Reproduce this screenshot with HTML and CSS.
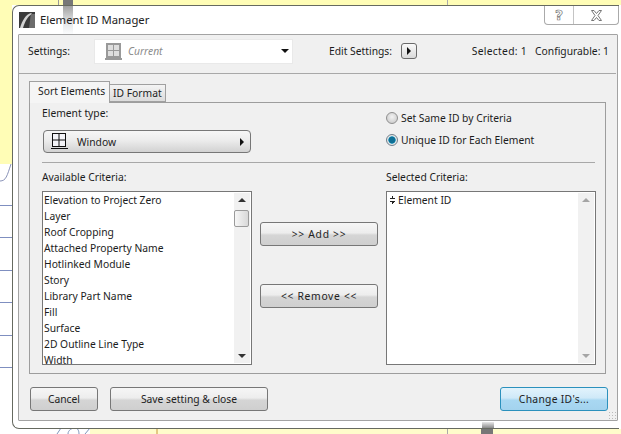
FILE: index.html
```html
<!DOCTYPE html>
<html lang="en">
<head>
<meta charset="utf-8">
<title>Element ID Manager</title>
<link rel="stylesheet" href="styles.css">
</head>
<body>
<div class="desktop">
  <div class="paper paper-left"></div>
  <div class="paper paper-top"></div>
  <div class="paper paper-bottom"></div>
  <div class="plan plan-h y1"></div>
  <div class="plan plan-h y2"></div>
  <div class="plan plan-h y3"></div>
  <div class="plan plan-h y4"></div>
  <div class="plan plan-h y5"></div>
  <div class="plan plan-h y6"></div>
  <div class="plan plan-v v1"></div>
  <div class="plan plan-v v2"></div>
  <div class="plan plan-v v3"></div>
  <div class="wall wall-top"></div>
  <div class="wall wall-bottom"></div>
  <svg class="curves" width="621" height="434" viewBox="0 0 621 434">
    <path d="M0 181C6 181 7 176 11 164" fill="none" stroke="#8a93b8"/>
    <path d="M57 434L61 428M68 434C68 430 72 428 75 428C78 428 79 431 79 434M85 434L90 428" fill="none" stroke="#7f96bd"/>
    <path d="M157 429V434" stroke="#c9963c"/>
  </svg>

  <section class="window">
    <div class="smear smear-top"></div>
    <div class="smear smear-bottom"></div>
    <header class="titlebar">
      <svg class="app-logo" width="16" height="16" viewBox="0 0 16 16">
        <rect width="16" height="16" fill="#3a3a3a"/>
        <path d="M1 16C3 9 7 2 12 1L13 2C9 4 6 9 4 16Z" fill="#d2d2d2"/>
        <path d="M12 2H16V16H10C11 10 11 6 12 2Z" fill="#6c6c6c"/>
      </svg>
      <span class="title">Element ID Manager</span>
      <div class="captions">
        <span class="caption caption-help">?</span>
        <span class="caption caption-close">
          <svg width="13" height="11" viewBox="0 0 13 11"><path d="M1.500 .5H4L6.500 3.500L9 .5H11.500L8 5.500L11.500 10.500H9L6.500 7.500L4 10.500H1.500L5 5.500Z" fill="#fff" stroke="#777"/></svg>
        </span>
      </div>
    </header>

    <main class="panel">
      <div class="settings-row">
        <span class="settings-label">Settings:</span>
        <div class="combo">
          <svg class="combo-icon" width="17" height="18" viewBox="0 0 17 18">
            <path d="M1 0H16V15H1Z" fill="#999"/>
            <path d="M3 2H8V7H3ZM9 2H14V7H9ZM3 8H8V13H3ZM9 8H14V13H9Z" fill="#dedede"/>
            <rect y="15" width="17" height="2" fill="#999"/>
          </svg>
          <em class="combo-value">Current</em>
          <span class="arrow-down"></span>
        </div>
        <span class="edit-label">Edit Settings:</span>
        <button class="mini-btn" type="button" aria-label="Edit"><span class="arrow-right"></span></button>
        <span class="counts"><span class="count-selected">Selected: 1</span><span>Configurable: 1</span></span>
      </div>

      <div class="tabs">
        <div class="tab tab-active">Sort Elements</div>
        <div class="tab">ID Format</div>
      </div>

      <div class="tab-body">
        <div class="type-row">
          <div class="type-col">
            <div class="field-label">Element type:</div>
            <button class="popup" type="button">
              <svg width="17" height="17" viewBox="0 0 17 17">
                <rect x="1.500" y=".5" width="13" height="13" fill="#f4f4f8" stroke="#111"/>
                <path d="M8 1V13M2 7H14" stroke="#111" fill="none"/>
                <rect y="15" width="17" height="1" fill="#111"/>
              </svg>
              <span class="popup-text">Window</span>
              <span class="arrow-right"></span>
            </button>
          </div>
          <div class="radio-col">
            <label class="radio-row"><span class="radio"></span>Set Same ID by Criteria</label>
            <label class="radio-row"><span class="radio radio-on"></span>Unique ID for Each Element</label>
          </div>
        </div>
        <div class="rule"></div>

        <div class="criteria">
          <div class="crit-col">
            <div class="field-label">Available Criteria:</div>
            <div class="listbox">
              <ul class="items">
                <li>Elevation to Project Zero</li>
                <li>Layer</li>
                <li>Roof Cropping</li>
                <li>Attached Property Name</li>
                <li>Hotlinked Module</li>
                <li>Story</li>
                <li>Library Part Name</li>
                <li>Fill</li>
                <li>Surface</li>
                <li>2D Outline Line Type</li>
                <li>Width</li>
              </ul>
              <div class="scrollbar">
                <span class="sb-up"></span>
                <span class="sb-thumb"></span>
                <span class="sb-down"></span>
              </div>
            </div>
          </div>

          <div class="move-col">
            <button class="btn move-btn" type="button">&gt;&gt; Add &gt;&gt;</button>
            <button class="btn move-btn" type="button">&lt;&lt; Remove &lt;&lt;</button>
          </div>

          <div class="crit-col">
            <div class="field-label">Selected Criteria:</div>
            <div class="listbox">
              <ul class="items">
                <li class="sel-item"><span class="updown"></span>Element ID</li>
              </ul>
              <div class="scrollbar scrollbar-off">
                <span class="sb-up"></span>
                <span class="sb-down"></span>
              </div>
            </div>
          </div>
        </div>
      </div>

      <footer class="actions">
        <button class="btn btn-cancel" type="button">Cancel</button>
        <button class="btn btn-save" type="button">Save setting &amp; close</button>
        <button class="btn btn-default" type="button">Change ID's...</button>
      </footer>
      <span class="grip"></span>
    </main>
  </section>
</div>
</body>
</html>
```
FILE: styles.css
```css
* { box-sizing: border-box; }
html, body { margin: 0; padding: 0; }
body { width: 621px; height: 434px; overflow: hidden; background: #fff; }
.desktop {
  position: relative;
  width: 621px;
  height: 434px;
  overflow: hidden;
  font-family: "Noto Sans", "Open Sans", sans-serif;
  font-size: 10.300px;
  color: #1c1c1c;
}
.paper { position: absolute; background: #fffdb6; }
.paper-left { left: 0; top: 0; width: 12px; height: 164px; }
.paper-top { left: 0; top: 0; width: 621px; height: 5px; }
.paper-bottom { left: 90px; top: 429px; width: 531px; height: 5px; background: #fffccb; }
.plan { position: absolute; background: #7f8fc0; }
.plan-h { left: 0; width: 12px; height: 1px; }
.y1 { top: 205px; }
.y2 { top: 237px; }
.y3 { top: 270px; }
.y4 { top: 302px; }
.y5 { top: 335px; }
.y6 { top: 367px; }
.plan-v { width: 1px; height: 5px; }
.v1 { left: 58px; top: 0; background: #999; }
.v2 { left: 447px; top: 0; background: #aaa; }
.v3 { left: 447px; top: 429px; background: #aaa; }
.wall { position: absolute; background: #777; }
.wall-top { left: 63px; top: 0; width: 10px; height: 5px; }
.wall-bottom { left: 481px; top: 429px; width: 12px; height: 5px; }
.curves { position: absolute; left: 0; top: 0; }

.window {
  position: absolute;
  left: 12px;
  top: 5px;
  width: 607px;
  height: 424px;
  display: flex;
  flex-direction: column;
  padding: 0 0 7px 5px;
  background: #fff;
  border: 1px solid #666a60;
  border-right: 0;
  border-radius: 7px 0 0 7px;
}
.smear { position: absolute; }
.smear-top {
  left: 50px;
  top: 0;
  width: 10px;
  height: 28px;
  background: linear-gradient(rgba(120, 120, 120, .7), rgba(190, 195, 200, .4) 60%, rgba(220, 228, 235, .1));
}
.smear-bottom {
  left: 469px;
  bottom: 0;
  width: 12px;
  height: 6px;
  background: linear-gradient(#e8e8e8, #8a8a8a);
}
.titlebar {
  position: relative;
  display: flex;
  align-items: flex-start;
  height: 28px;
  flex: none;
}
.app-logo { margin: 6px 0 0 1px; }
.title { margin: 5px 0 0 5px; font-size: 11.300px; line-height: 17px; color: #222; }
.captions {
  margin-left: auto;
  display: flex;
  width: 75px;
  height: 19px;
  border: 1px solid #aaa;
  border-top: 0;
  border-radius: 0 0 4px 4px;
}
.caption { display: flex; align-items: center; justify-content: center; }
.caption-help {
  width: 29px;
  border-right: 1px solid #c4c4c4;
  font-size: 14px;
  font-weight: bold;
  font-family: "DejaVu Sans", sans-serif;
  color: #fff;
  -webkit-text-stroke: .7px #777;
}
.caption-close { flex: 1; }

.panel {
  position: relative;
  flex: 1;
  display: flex;
  flex-direction: column;
  margin-right: 1px;
  background: #f0f0f0;
  border: 1px solid #a3a3a3;
  border-radius: 1px;
}
.settings-row {
  display: flex;
  align-items: center;
  height: 39px;
  margin-right: 1px;
  padding: 0 7px 6px 9px;
  border-bottom: 1px solid #a8a8a8;
  flex: none;
}
.settings-label { width: 66px; }
.combo {
  width: 199px;
  height: 25px;
  display: flex;
  align-items: center;
  padding: 0 3px 0 10px;
  background: #fff;
  border: 1px solid #e9e9e9;
}
.combo-icon { flex: none; margin-top: 2px; }
.combo-value { margin-left: 6px; color: #8c8c8c; }
.arrow-down {
  margin-left: auto;
  width: 0;
  height: 0;
  border-left: 4px solid transparent;
  border-right: 4px solid transparent;
  border-top: 4px solid #111;
}
.edit-label { margin-left: 36px; }
.mini-btn {
  width: 16px;
  height: 16px;
  margin-left: 9px;
  padding: 0;
  display: flex;
  align-items: center;
  justify-content: center;
  background: linear-gradient(#fafafa, #d9d9d9);
  border: 1px solid #6a6a6a;
  border-radius: 3px;
}
.arrow-right {
  display: block;
  width: 0;
  height: 0;
  border-top: 4px solid transparent;
  border-bottom: 4px solid transparent;
  border-left: 4px solid #111;
}
.counts { margin-left: auto; display: flex; gap: 8px; }
.count-selected { letter-spacing: .3px; }

.tabs {
  position: relative;
  z-index: 1;
  display: flex;
  align-items: flex-end;
  height: 29px;
  padding-left: 10px;
  flex: none;
}
.tab {
  width: 56px;
  height: 18px;
  margin-bottom: 1px;
  padding: 1px 0 0 3px;
  line-height: 15px;
  background: linear-gradient(#f4f4f4, #dcdcdc);
  border: 1px solid #a0a0a0;
  border-left: 0;
  white-space: nowrap;
}
.tab-active {
  width: 81px;
  height: 22px;
  margin-bottom: 0;
  padding: 2px 0 0 8px;
  background: #f5f5f5;
  border-left: 1px solid #a0a0a0;
  border-bottom: 0;
}
.tab-body {
  margin: -1px 11px 0 10px;
  height: 272px;
  padding: 3px 10px 8px 12px;
  border: 1px solid #9d9d9d;
  flex: none;
}
.type-row { display: flex; height: 56px; }
.type-col { width: 344px; }
.field-label { height: 16px; line-height: 15px; }
.popup {
  width: 208px;
  height: 23px;
  margin: 8px 0 0 1px;
  padding: 0 6px 0 7px;
  display: flex;
  align-items: center;
  font: inherit;
  color: #222;
  background: linear-gradient(#f6f6f6 0, #ececec 45%, #d2d2d2 100%);
  border: 1px solid #777;
  border-radius: 4px;
}
.popup-text { margin-left: 9px; }
.popup .arrow-right { margin-left: auto; }
.radio-col { display: flex; flex-direction: column; gap: 6px; padding-top: 4px; }
.radio-row { display: flex; align-items: center; height: 16px; gap: 3px; }
.radio {
  width: 12px;
  height: 12px;
  border-radius: 50%;
  border: 1px solid #8f8f8f;
  background: radial-gradient(circle at 50% 40%, #f2f2f2, #c4c4c4);
}
.radio-on {
  border-color: #6f7f8c;
  background: radial-gradient(circle, #0e6f95 0 3px, #39a3c6 3.500px, #e6e6e6 4px);
}
.rule { height: 1px; background: #a8a8a8; }
.criteria {
  display: grid;
  grid-template-columns: 210px 134px 210px;
  margin-top: 7px;
}
.crit-col .field-label { margin-bottom: 5px; }
.listbox {
  display: flex;
  height: 174px;
  background: #fff;
  border: 1px solid #777;
  overflow: hidden;
}
.items {
  flex: 1;
  min-width: 0;
  margin: 0;
  padding: 0 0 0 1px;
  list-style: none;
}
.items li { height: 16px; line-height: 16px; white-space: nowrap; }
.sel-item { display: flex; align-items: center; gap: 3px; padding-left: 2px; }
.updown {
  width: 5px;
  height: 8px;
  background:
    linear-gradient(to bottom right, transparent 50%, #222 50%) 0 0 / 3px 3px no-repeat,
    linear-gradient(to bottom left, transparent 50%, #222 50%) 2px 0 / 3px 3px no-repeat,
    linear-gradient(to top right, transparent 50%, #222 50%) 0 5px / 3px 3px no-repeat,
    linear-gradient(to top left, transparent 50%, #222 50%) 2px 5px / 3px 3px no-repeat;
}
.scrollbar {
  position: relative;
  width: 16px;
  margin: 1px;
  flex: none;
  background: #f1f1f1;
}
.sb-up, .sb-down {
  position: absolute;
  left: 4px;
  width: 0;
  height: 0;
  border-left: 4px solid transparent;
  border-right: 4px solid transparent;
}
.sb-up { top: 5px; border-bottom: 4px solid #333; }
.sb-down { bottom: 5px; border-top: 4px solid #333; }
.scrollbar-off .sb-up { border-bottom-color: #a5a5a5; }
.scrollbar-off .sb-down { border-top-color: #a5a5a5; }
.sb-thumb {
  position: absolute;
  left: 0;
  top: 17px;
  width: 15px;
  height: 17px;
  background: linear-gradient(to right, #f6f6f6, #d8d8d8);
  border: 1px solid #9a9a9a;
  border-radius: 2px;
}
.move-col {
  display: flex;
  flex-direction: column;
  gap: 38px;
  padding: 52px 8px 0;
  align-items: center;
}
.btn {
  font: inherit;
  color: #222;
  padding: 0;
  background: linear-gradient(#f6f6f6 0, #ededed 45%, #d5d5d5 55%, #cfcfcf 100%);
  border: 1px solid #777;
  border-radius: 3px;
}
.move-btn { width: 118px; height: 24px; letter-spacing: .7px; }
.actions {
  display: flex;
  height: 24px;
  margin-top: 13px;
  padding: 0 9px 0 11px;
  flex: none;
}
.btn-cancel { width: 68px; }
.btn-save { width: 158px; margin-left: 12px; }
.btn-default {
  width: 108px;
  margin-left: auto;
  letter-spacing: .3px;
  background: linear-gradient(#e2f3fc 0, #cfe9f8 45%, #a9d8f2 55%, #a3d3ee 100%);
  border: 1px solid #2b91bd;
}
.grip {
  position: absolute;
  right: 1px;
  bottom: 1px;
  width: 8px;
  height: 8px;
  background: radial-gradient(circle, #bbb 1px, transparent 1px) 0 0 / 3px 3px;
}
```
